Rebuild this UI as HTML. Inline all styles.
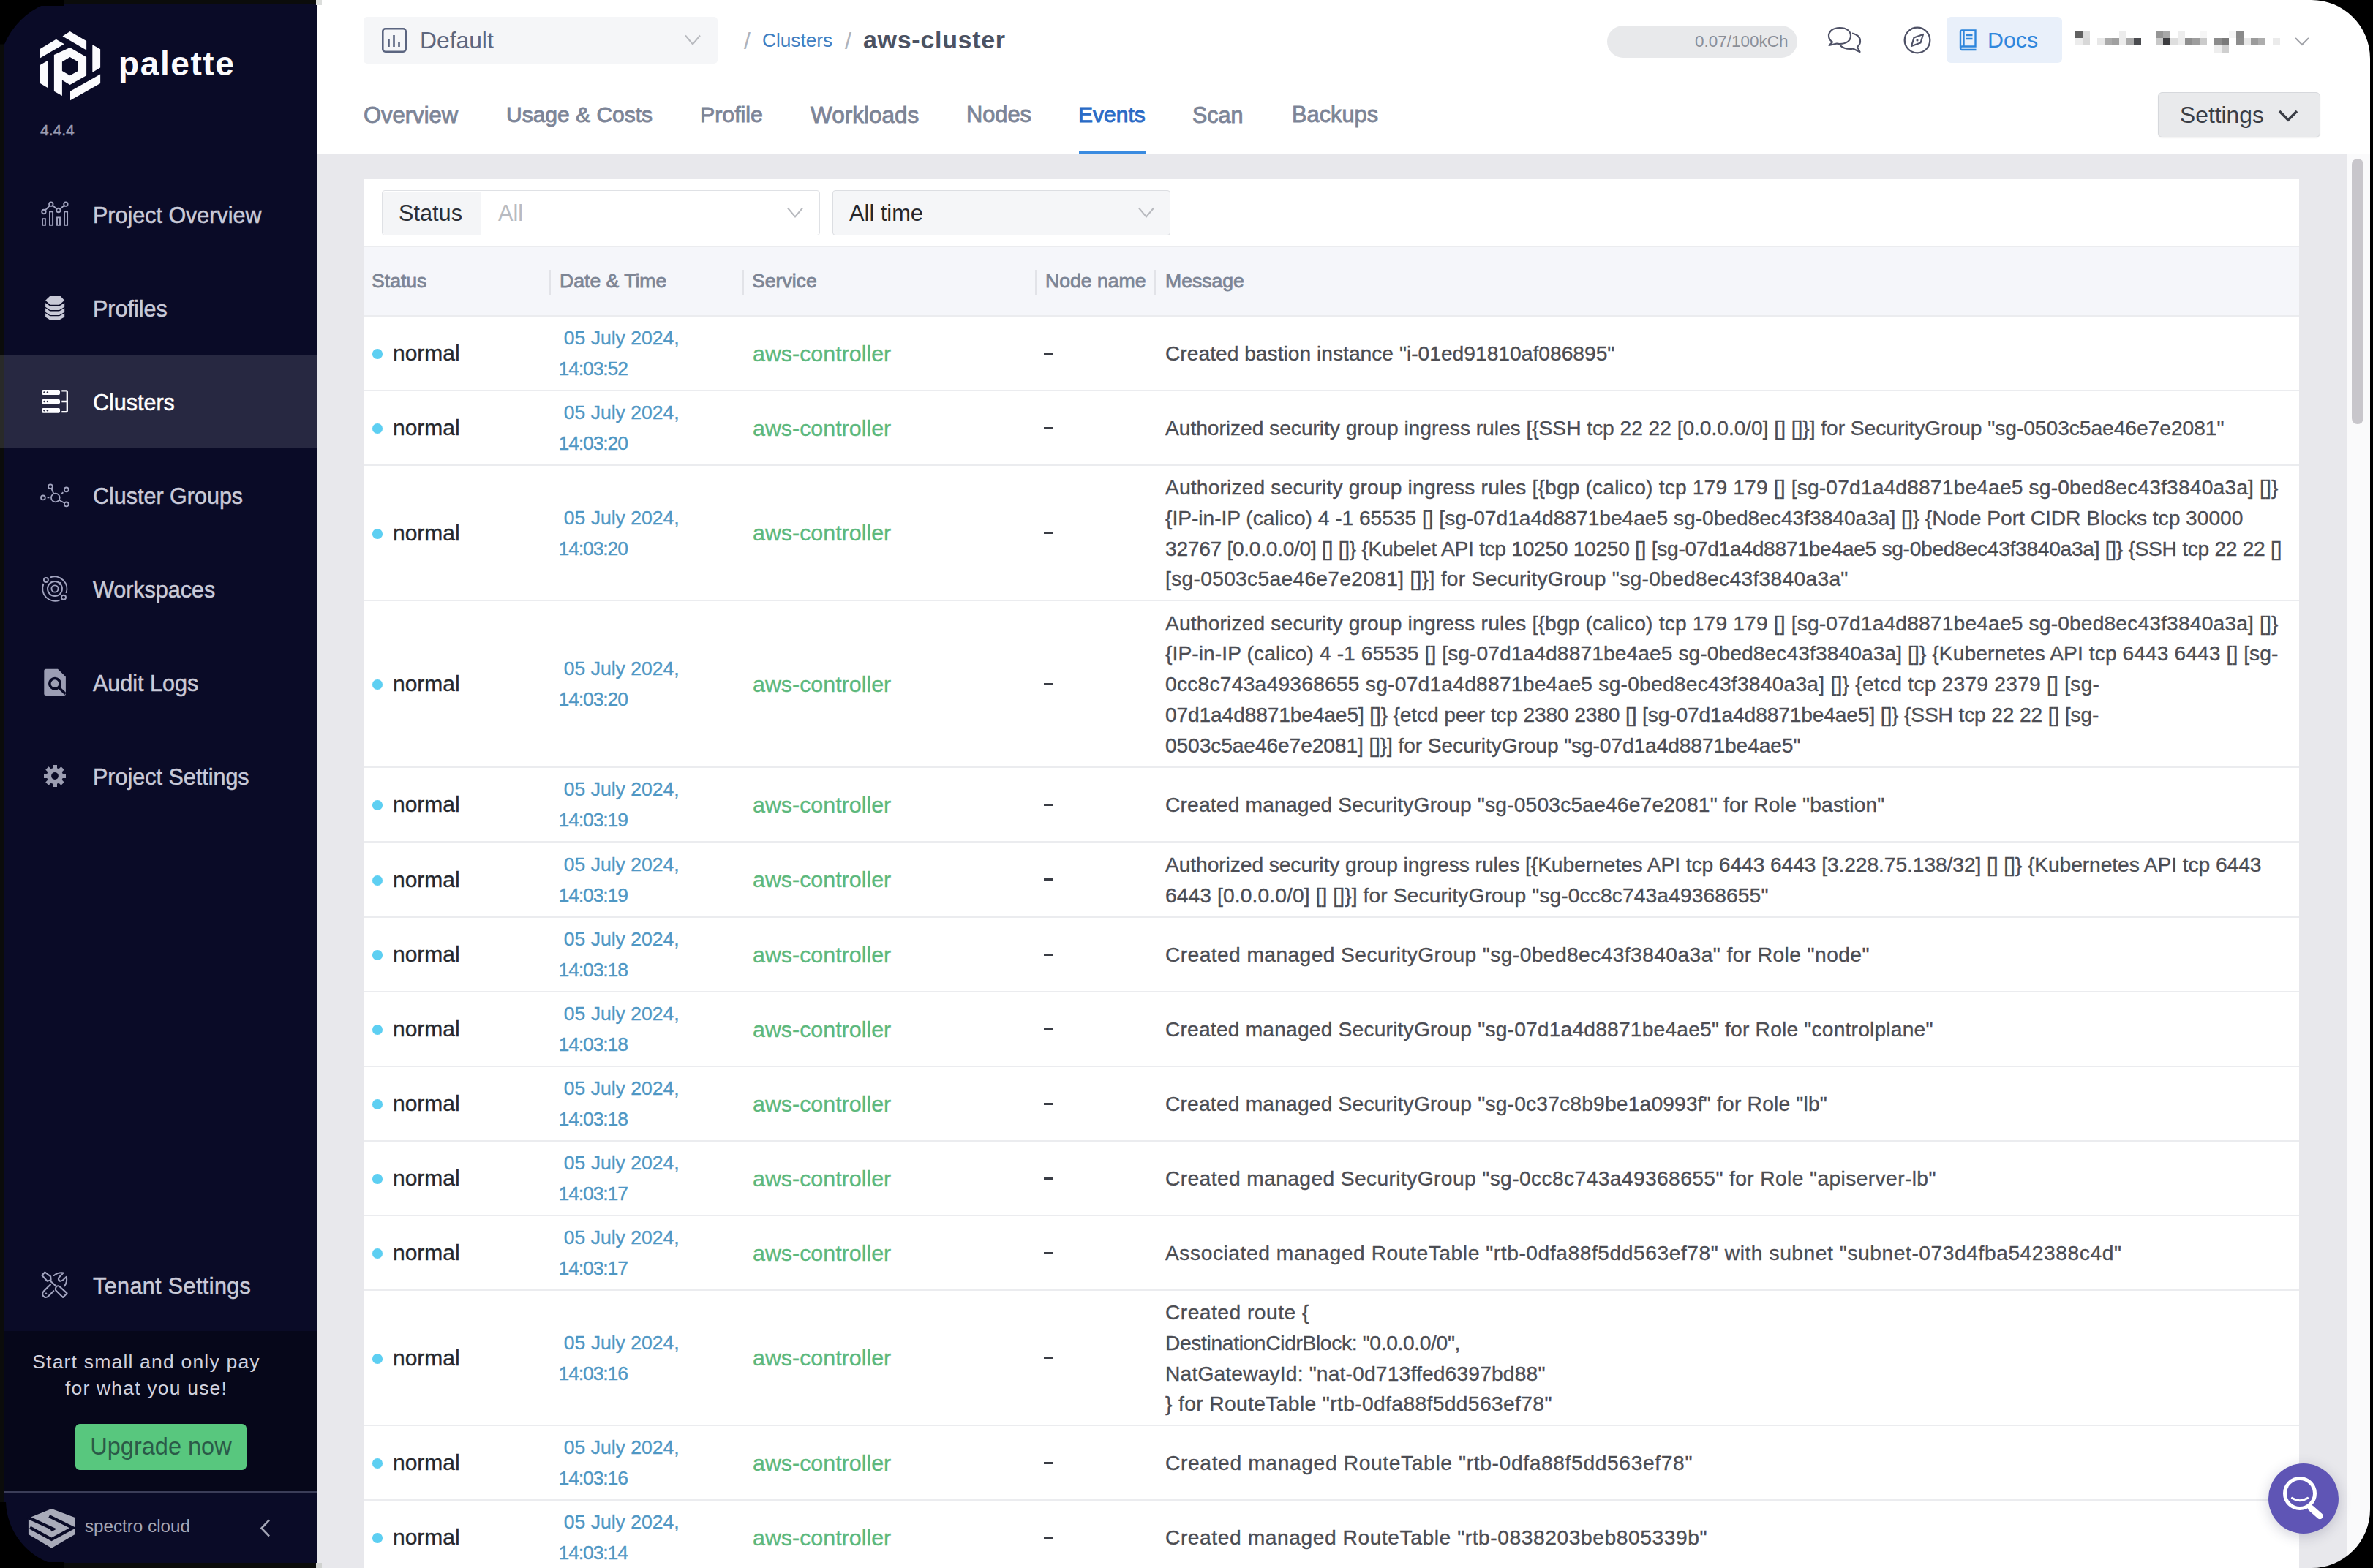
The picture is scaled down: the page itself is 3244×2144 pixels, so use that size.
<!DOCTYPE html>
<html><head><meta charset="utf-8">
<style>
*{box-sizing:border-box;margin:0;padding:0}
html,body{width:3244px;height:2144px;overflow:hidden;background:#fff}
body{position:relative;font-family:"Liberation Sans",sans-serif}
.a{position:absolute}
.t{position:absolute;white-space:pre;line-height:1}
#side{position:absolute;left:0;top:0;width:433px;height:2144px;background:#0a0b27}
.nav{position:absolute;left:6px;width:427px;height:128px}
.nav .lbl{position:absolute;left:121px;top:1px;height:128px;line-height:128px;font-size:30.5px;color:#c9cad8;white-space:pre}
.nav svg{position:absolute}

.row{position:absolute;left:497px;width:2646px;background:#fff}
.row .c{position:absolute;top:0;bottom:0;display:flex;align-items:center;white-space:pre}
.dot{position:absolute;left:12px;top:50%;margin-top:-5.6px;width:13.6px;height:13.6px;border-radius:50%;background:#5dcff2}
.st{left:40px;font-size:30px;color:#27272b}
.dt{top:2px !important;left:266.5px;font-size:26.5px;line-height:41.75px;color:#4f97c4}
.sv{left:532px;font-size:30.4px;color:#5db87c}
.nd{position:absolute;left:930px;width:12px;height:2.6px;background:#3a3d45}
.ms{top:2px !important;left:1096px;font-size:28.2px;line-height:41.75px;color:#4c4d53}
.tm{letter-spacing:-1.1px}
.hd{position:absolute;top:371px;font-size:26.6px;line-height:1;color:#7d8595;white-space:pre}

.tab{-webkit-text-stroke:0.9px currentColor}
.hd{-webkit-text-stroke:0.8px currentColor}
.nav .lbl{-webkit-text-stroke:0.5px currentColor}
.row .c{-webkit-text-stroke:0.35px currentColor}
</style></head>
<body>
<!-- SIDEBAR -->
<div id="side">
  <!-- logo -->
  <svg class="a" style="left:55px;top:43px" width="83" height="95" viewBox="0 0 83 95">
    <g fill="#fbfbfd">
      <polygon points="30.5,6.6 40.6,0 63.1,12.9 63.1,25.6"/>
      <polygon points="0,23.7 21.7,10.8 32.8,17.3 0,36.3"/>
      <polygon points="71.3,18 82.1,24.3 82.1,49.6 71.3,55.9"/>
      <polygon points="0,45.8 10.9,39.5 10.9,77.4 0,71"/>
      <polygon points="41,81.8 82.1,58.4 82.1,71 41,94.2"/>
      <path fill-rule="evenodd" d="M18.9,31.9 L40.6,22.1 L63.1,35 L63.1,60.3 L40.6,73 L29.9,66.6 L29.9,88.1 L18.9,81.8 Z M29.9,41.4 L40.6,35 L51.8,41.4 L51.8,54 L40.6,60.3 L29.9,54 Z"/>
    </g>
  </svg>
  <div class="t" style="left:162px;top:64px;font-size:46px;font-weight:bold;letter-spacing:1.6px;color:#fbfbfd">palette</div>
  <div class="t" style="left:55px;top:167px;font-size:21px;color:#9a9cb2;-webkit-text-stroke:0.5px currentColor">4.4.4</div>

  <!-- nav -->
  <div class="nav" style="top:229px"><div class="lbl">Project Overview</div></div>
  <div class="nav" style="top:357px"><div class="lbl">Profiles</div></div>
  <div class="nav" style="top:485px;background:#272841"><div class="lbl" style="color:#fff">Clusters</div></div>
  <div class="nav" style="top:613px"><div class="lbl">Cluster Groups</div></div>
  <div class="nav" style="top:741px"><div class="lbl">Workspaces</div></div>
  <div class="nav" style="top:869px"><div class="lbl">Audit Logs</div></div>
  <div class="nav" style="top:997px"><div class="lbl">Project Settings</div></div>
  <div class="nav" style="top:1693px"><div class="lbl" style="letter-spacing:0.4px">Tenant Settings</div></div>


  <!-- nav icons -->
  <svg class="a" style="left:0;top:0" width="433" height="2144" viewBox="0 0 433 2144">
    <g fill="none" stroke="#a2a4bf" stroke-width="1.9">
      <path d="M59.9,289.5 L69.8,279.2 L79.9,287.5 L89.9,279.2"/>
      <circle cx="59.9" cy="289.5" r="2.7" fill="#0a0b27"/>
      <circle cx="69.8" cy="279.2" r="2.7" fill="#0a0b27"/>
      <circle cx="79.9" cy="287.5" r="2.7" fill="#0a0b27"/>
      <circle cx="89.9" cy="279.2" r="2.7" fill="#0a0b27"/>
      <rect x="58" y="299.2" width="3.9" height="8.6"/>
      <rect x="68" y="289.4" width="4.1" height="18.4"/>
      <rect x="78" y="297.4" width="4" height="10.4"/>
      <rect x="88" y="289.4" width="4.1" height="18.4"/>
    </g>
    <g fill="#c8c9d7">
      <polygon points="62.1,410.8 68.1,404.9 82.7,404.9 88.2,410.8 81,416.7 68.7,416.7"/>
      <polygon points="62.1,414.3 68.4,418.6 81,418.6 88.2,414.3 88.2,419.8 81,424 68.4,424 62.1,419.8"/>
      <polygon points="62.1,421.3 68.4,425.5 81,425.5 88.2,421.3 88.2,426.8 81,431 68.4,431 62.1,426.8"/>
      <polygon points="62.1,428.2 68.4,432.3 81,432.3 88.2,428.2 88.2,433.5 81,437.4 68.4,437.4 62.1,433.5"/>
    </g>
    <g fill="#fdfdff">
      <rect x="57" y="533" width="25" height="7" rx="2"/>
      <rect x="57" y="546" width="25" height="6.3" rx="2"/>
      <rect x="57" y="558" width="25" height="6.8" rx="2"/>
    </g>
    <g fill="#272841">
      <circle cx="60.5" cy="536.5" r="1.2"/><circle cx="64.9" cy="536.5" r="1.2"/>
      <circle cx="60.5" cy="549" r="1.2"/><circle cx="64.9" cy="549" r="1.2"/>
      <circle cx="60.5" cy="561.3" r="1.2"/><circle cx="64.9" cy="561.3" r="1.2"/>
    </g>
    <path d="M84.3,534.4 H90.6 Q91.8,534.4 91.8,535.6 V562 Q91.8,563.2 90.6,563.2 H84.3 M84.3,549 H91.8" fill="none" stroke="#fdfdff" stroke-width="2.3"/>
    <g fill="none" stroke="#a2a4bf" stroke-width="1.8">
      <circle cx="75.8" cy="680.5" r="5.8"/>
      <circle cx="68.9" cy="665.3" r="2.9"/>
      <circle cx="90.8" cy="669.4" r="2.9"/>
      <circle cx="58.9" cy="680.4" r="2.9"/>
      <circle cx="90.8" cy="689.4" r="2.9"/>
      <path d="M70.6,668.6 L73.4,675.2 M64.6,680.4 H67.4 M84,675.2 L86.4,673.2 M80.7,683.8 L88.2,687.8"/>
    </g>
    <g fill="none" stroke="#a2a4bf" stroke-width="1.9">
      <path d="M68.5,789.5 A17,17 0 0 1 90.5,811 M81.5,820.5 A17,17 0 0 1 59.5,798"/>
      <circle cx="75" cy="805" r="10"/>
      <circle cx="75" cy="805" r="4.6"/>
      <circle cx="62.9" cy="793" r="3"/>
      <circle cx="87" cy="816.8" r="3"/>
    </g>
    <circle cx="81.9" cy="797.8" r="2.1" fill="#a2a4bf"/>
    <path d="M62.8,914.7 H79 L89.9,925.5 V948.5 Q89.9,951 87.4,951 H62.8 Q60.3,951 60.3,948.5 V917.2 Q60.3,914.7 62.8,914.7 Z" fill="#9c9eb4"/>
    <g fill="none" stroke="#0a0b27" stroke-width="3.6">
      <circle cx="75" cy="934.7" r="7.2"/>
      <path d="M80.3,940 L89.5,948.8"/>
    </g>
    
    <g transform="translate(75,1061)" fill="#9c9eb2">
      <circle r="11"/>
      <rect x="-3" y="-15" width="6" height="30"/>
      <rect x="-3" y="-15" width="6" height="30" transform="rotate(45)"/>
      <rect x="-3" y="-15" width="6" height="30" transform="rotate(90)"/>
      <rect x="-3" y="-15" width="6" height="30" transform="rotate(135)"/>
      <circle r="4.9" fill="#0a0b27"/>
    </g>
    <g fill="none" stroke="#a2a4bf" stroke-width="2.1" stroke-linejoin="round" stroke-linecap="round">
      <path d="M57.4,1743.8 L61.4,1739.5 L69.2,1745.3 L69.6,1750.2 L64.6,1751.7 Z"/>
      <path d="M68.5,1751.3 L77,1759"/>
      <path d="M77.3,1758.8 Q79.5,1757.5 81.3,1759 L91.6,1768.4 L86.1,1773.9 L76.4,1764.6 Q74.9,1762.6 77.3,1758.8 Z"/>
      <path d="M68.9,1756.5 L59.5,1765.8 Q56.5,1769.5 59.5,1772.5 Q62.5,1775.5 66,1772.5 L73.3,1765.2"/>
      <path d="M73.8,1744 Q79.5,1739.5 86.4,1740.5 L80.5,1746.8 Q79,1750 81.5,1751.5 Q84,1753 90.6,1745.9 Q92.5,1752.5 88.2,1758.5"/>
    </g>
    <circle cx="63" cy="1768.8" r="1.3" fill="#a2a4bf"/>
    <!-- spectro logo -->
    <polygon fill="#a9abb9" points="38.9,2075.8 70.5,2063.1 102.5,2075.1 102.5,2098 70.5,2116.8 38.9,2098"/>
    <g fill="none" stroke="#0a0b27" stroke-width="4.2" stroke-linejoin="miter">
      <path d="M37.5,2074.5 L72.7,2090.7 L69.5,2092.4"/>
      <path d="M67.2,2073.2 L99.6,2089.2 L70.5,2104.9 L41,2088.6"/>
    </g>
    <path d="M368,2078.5 L357.5,2089.5 L368,2100.5" fill="none" stroke="#a4a6b6" stroke-width="2.6"/>
  </svg>

  <!-- promo -->
  <div class="a" style="left:6px;top:1820px;width:427px;height:219px;background:#06071a"></div>
  <div class="t" style="left:0px;width:400px;top:1849px;font-size:26.5px;letter-spacing:1.2px;color:#d0d1de;text-align:center">Start small and only pay</div>
  <div class="t" style="left:0px;width:400px;top:1885px;font-size:26.5px;letter-spacing:1.2px;color:#d0d1de;text-align:center">for what you use!</div>
  <div class="a" style="left:103px;top:1947px;width:234px;height:63px;background:#58c77e;border-radius:6px"></div>
  <div class="t" style="left:103px;width:234px;top:1962px;font-size:32.5px;color:#2b5a48;text-align:center">Upgrade now</div>
  <div class="a" style="left:6px;top:2039px;width:427px;height:2px;background:#3b3d58"></div>
  <div class="t" style="left:116px;top:2075px;font-size:24.2px;color:#a4a6b6">spectro cloud</div>
</div>

<!-- MAIN -->
<div class="a" style="left:433px;top:0;width:2811px;height:211px;background:#fff"></div>
<div class="a" style="left:434px;top:211px;width:2775px;height:1933px;background:#e8e8ec"></div>
<div class="a" style="left:3209px;top:211px;width:31px;height:1933px;background:#fafafb"></div>
<div class="a" style="left:3215px;top:217px;width:16px;height:363px;background:#c8c6cb;border-radius:8px"></div>

<!-- HEADER -->
<div class="a" style="left:497px;top:23px;width:484px;height:64px;background:#f5f6f8;border-radius:5px"></div>
<svg class="a" style="left:522px;top:38px" width="34" height="34" viewBox="0 0 34 34">
  <rect x="1.3" y="1.3" width="31.4" height="31.4" rx="3.5" fill="none" stroke="#5b6580" stroke-width="2.6"/>
  <path d="M9.5,16 V26 M16.5,10 V26 M23.5,19 V26" stroke="#5b6580" stroke-width="2.6" fill="none"/>
</svg>
<div class="t" style="left:574px;top:40px;font-size:31.8px;color:#5d6780">Default</div>
<svg class="a" style="left:936px;top:47px" width="22" height="16" viewBox="0 0 22 16">
  <path d="M1,1.5 L11,13.5 L21,1.5" fill="none" stroke="#b8babf" stroke-width="2"/>
</svg>
<div class="t" style="left:1017px;top:40px;font-size:32px;color:#aeb2ba">/</div>
<div class="t" style="left:1042px;top:42px;font-size:26.2px;color:#3f7fc2">Clusters</div>
<div class="t" style="left:1155px;top:40px;font-size:32px;color:#aeb2ba">/</div>
<div class="t" style="left:1180px;top:37px;font-size:34px;color:#4b5262;font-weight:bold;letter-spacing:0.7px">aws-cluster</div>

<!-- tabs -->
<div class="t tab" style="left:497px;top:142px;font-size:31px;color:#7d8597">Overview</div>
<div class="t tab" style="left:692px;top:142px;font-size:30px;color:#7d8597">Usage &amp; Costs</div>
<div class="t tab" style="left:957px;top:142px;font-size:30.3px;color:#7d8597">Profile</div>
<div class="t tab" style="left:1108px;top:142px;font-size:31.5px;color:#7d8597">Workloads</div>
<div class="t tab" style="left:1321px;top:142px;font-size:30.8px;color:#7d8597">Nodes</div>
<div class="t tab" style="left:1474px;top:142px;font-size:30px;color:#2a6bc6">Events</div>
<div class="a" style="left:1475px;top:207px;width:92px;height:4px;background:#3a8be0"></div>
<div class="t tab" style="left:1630px;top:142px;font-size:30.5px;color:#7d8597">Scan</div>
<div class="t tab" style="left:1766px;top:142px;font-size:30.8px;color:#7d8597">Backups</div>

<!-- right header -->
<div class="a" style="left:2197px;top:35px;width:260px;height:44px;background:#e8e9eb;border-radius:22px"></div>
<div class="t" style="left:2317px;top:46px;font-size:22.5px;color:#8a8f99">0.07/100kCh</div>
<svg class="a" style="left:2497px;top:35px" width="50" height="40" viewBox="0 0 50 40">
  <path d="M18,3 C8,3 3,8.5 3,14 C3,17.5 5,20.5 8,22.5 L3.5,27 L14,24.5 C15.5,25 16.8,25 18,25 C28,25 33,20 33,14 C33,8 28,3 18,3 Z" fill="none" stroke="#4e5166" stroke-width="2.2" stroke-linejoin="round"/>
  <path d="M35,10.5 C41.5,12 46,16 46,21.5 C46,24.5 44.5,27 42,29 L45.5,36 L36,31.5 C35,31.8 33.8,32 32.5,32 C26.5,32 21.5,30 18.5,27" fill="none" stroke="#4e5166" stroke-width="2.2" stroke-linejoin="round"/>
</svg>
<svg class="a" style="left:2601px;top:35px" width="40" height="40" viewBox="0 0 40 40">
  <circle cx="20" cy="20" r="17.3" fill="none" stroke="#4e5166" stroke-width="2.3"/>
  <path d="M28,12 L24.5,23.5 L12,28 L15.5,16.5 Z" fill="none" stroke="#4e5166" stroke-width="2.2" stroke-linejoin="round"/>
  <circle cx="20" cy="20" r="1.6" fill="#4e5166"/>
</svg>
<div class="a" style="left:2661px;top:23px;width:158px;height:63px;background:#e9f0fa;border-radius:6px"></div>
<svg class="a" style="left:2676px;top:40px" width="28" height="30" viewBox="0 0 28 30">
  <path d="M4,25 V3.5 C4,2.5 4.8,1.5 6,1.5 H24.5 V23.5 H6 C4.8,23.5 4,24.5 4,25.5 C4,27 4.8,28 6,28 H25.5" fill="none" stroke="#2f86dc" stroke-width="2.4"/>
  <path d="M8.5,1.5 V23.5 M12,8 H20.5 M12,13 H20.5" fill="none" stroke="#2f86dc" stroke-width="2.4"/>
</svg>
<div class="t" style="left:2717px;top:40px;font-size:30.3px;color:#2f87dd">Docs</div>
<!-- pixelated user -->
<div class="a" style="left:2837px;top:42px;width:10px;height:10px;background:#616161"></div>
<div class="a" style="left:2847px;top:42px;width:10px;height:10px;background:#dcdcdc"></div>
<div class="a" style="left:2897px;top:42px;width:10px;height:10px;background:#ececec"></div>
<div class="a" style="left:2947px;top:42px;width:10px;height:10px;background:#959595"></div>
<div class="a" style="left:2957px;top:42px;width:10px;height:10px;background:#a8a8a8"></div>
<div class="a" style="left:2977px;top:42px;width:10px;height:10px;background:#ededed"></div>
<div class="a" style="left:3007px;top:42px;width:10px;height:10px;background:#f6f6f6"></div>
<div class="a" style="left:3047px;top:42px;width:10px;height:10px;background:#f5f5f5"></div>
<div class="a" style="left:3057px;top:42px;width:10px;height:10px;background:#8a8a8a"></div>
<div class="a" style="left:2837px;top:52px;width:10px;height:10px;background:#ececec"></div>
<div class="a" style="left:2847px;top:52px;width:10px;height:10px;background:#d8d8d8"></div>
<div class="a" style="left:2867px;top:52px;width:10px;height:10px;background:#e8e8e8"></div>
<div class="a" style="left:2877px;top:52px;width:10px;height:10px;background:#aaaaaa"></div>
<div class="a" style="left:2887px;top:52px;width:10px;height:10px;background:#a0a0a0"></div>
<div class="a" style="left:2897px;top:52px;width:10px;height:10px;background:#ececec"></div>
<div class="a" style="left:2907px;top:52px;width:10px;height:10px;background:#a9a9a9"></div>
<div class="a" style="left:2917px;top:52px;width:10px;height:10px;background:#4a4b4f"></div>
<div class="a" style="left:2947px;top:52px;width:10px;height:10px;background:#c8c8c8"></div>
<div class="a" style="left:2957px;top:52px;width:10px;height:10px;background:#3c3c3f"></div>
<div class="a" style="left:2967px;top:52px;width:10px;height:10px;background:#dedede"></div>
<div class="a" style="left:2977px;top:52px;width:10px;height:10px;background:#ececec"></div>
<div class="a" style="left:2987px;top:52px;width:10px;height:10px;background:#8e8e8e"></div>
<div class="a" style="left:2997px;top:52px;width:10px;height:10px;background:#9d9d9d"></div>
<div class="a" style="left:3007px;top:52px;width:10px;height:10px;background:#cbcbcb"></div>
<div class="a" style="left:3027px;top:52px;width:10px;height:10px;background:#8c8c8c"></div>
<div class="a" style="left:3037px;top:52px;width:10px;height:10px;background:#7a7a7a"></div>
<div class="a" style="left:3057px;top:52px;width:10px;height:10px;background:#8d8d8d"></div>
<div class="a" style="left:3067px;top:52px;width:10px;height:10px;background:#e8e8e8"></div>
<div class="a" style="left:3077px;top:52px;width:10px;height:10px;background:#9b9b9b"></div>
<div class="a" style="left:3087px;top:52px;width:10px;height:10px;background:#adadad"></div>
<div class="a" style="left:3107px;top:52px;width:10px;height:10px;background:#ebebeb"></div>
<div class="a" style="left:3027px;top:62px;width:10px;height:10px;background:#eeeeee"></div>
<div class="a" style="left:3037px;top:62px;width:10px;height:10px;background:#cfcfcf"></div>
<svg class="a" style="left:3137px;top:51px" width="20" height="12" viewBox="0 0 20 12">
  <path d="M1,1 L10,10 L19,1" fill="none" stroke="#a0a2a8" stroke-width="2"/>
</svg>
<!-- settings button -->
<div class="a" style="left:2950px;top:126px;width:222px;height:62px;background:#e9eaec;border:1.5px solid #d6d8dc;border-radius:6px;box-shadow:0 1px 2px rgba(0,0,0,0.06)"></div>
<div class="t" style="left:2980px;top:142px;font-size:31.8px;color:#3a3d45">Settings</div>
<svg class="a" style="left:3114px;top:149px" width="28" height="19" viewBox="0 0 28 19">
  <path d="M2,3 L14,15 L26,3" fill="none" stroke="#3a3d45" stroke-width="3.6"/>
</svg>


<!-- CARD -->
<div class="a" style="left:497px;top:245px;width:2646px;height:1899px;background:#fff"></div>
<div class="a" style="left:522px;top:260px;width:599px;height:62px;border:1.5px solid #dfe1e5;border-radius:4px;background:#fff"></div>
<div class="a" style="left:523.5px;top:261.5px;width:134px;height:59px;background:#f4f5f7;border-right:1.5px solid #dfe1e5;border-radius:3px 0 0 3px"></div>
<div class="t" style="left:545px;top:277px;font-size:30.7px;color:#2c2f36">Status</div>
<div class="t" style="left:681px;top:277px;font-size:30.7px;color:#b8bbc1">All</div>
<svg class="a" style="left:1076px;top:283px" width="22" height="16" viewBox="0 0 22 16"><path d="M1,1.5 L11,13.5 L21,1.5" fill="none" stroke="#b8babf" stroke-width="2"/></svg>
<div class="a" style="left:1138px;top:260px;width:462px;height:62px;border:1.5px solid #dcdee2;border-radius:4px;background:#f5f6f8"></div>
<div class="t" style="left:1161px;top:277px;font-size:30.8px;color:#27272b">All time</div>
<svg class="a" style="left:1556px;top:283px" width="22" height="16" viewBox="0 0 22 16"><path d="M1,1.5 L11,13.5 L21,1.5" fill="none" stroke="#b8babf" stroke-width="2"/></svg>
<div class="a" style="left:497px;top:337px;width:2646px;height:94px;background:#f5f6fa;border-top:1.5px solid #ebecef"></div>
<div class="a" style="left:497px;top:431px;width:2646px;height:2px;background:#ebecef"></div>
<div class="hd" style="left:508px">Status</div>
<div class="hd" style="left:765px">Date &amp; Time</div>
<div class="hd" style="left:1028px">Service</div>
<div class="hd" style="left:1429px">Node name</div>
<div class="hd" style="left:1593px">Message</div>
<div class="a" style="left:751px;top:369px;width:2px;height:35px;background:#e2e3e8"></div>
<div class="a" style="left:1015px;top:369px;width:2px;height:35px;background:#e2e3e8"></div>
<div class="a" style="left:1415px;top:369px;width:2px;height:35px;background:#e2e3e8"></div>
<div class="a" style="left:1578px;top:369px;width:2px;height:35px;background:#e2e3e8"></div>
<!-- TABLE ROWS -->
<div class="row" style="top:433px;height:100px">
 <div class="dot"></div><div class="c st">normal</div>
 <div class="c dt"><div> 05 July 2024,<br><span class="tm">14:03:52</span></div></div>
 <div class="c sv">aws-controller</div>
 <div class="nd" style="top:49px"></div>
 <div class="c ms"><div><span style="letter-spacing:0.009px">Created bastion instance "i-01ed91810af086895"</span></div></div>
</div>
<div class="a" style="left:497px;top:533px;width:2646px;height:2px;background:#ebecef"></div>
<div class="row" style="top:535px;height:100px">
 <div class="dot"></div><div class="c st">normal</div>
 <div class="c dt"><div> 05 July 2024,<br><span class="tm">14:03:20</span></div></div>
 <div class="c sv">aws-controller</div>
 <div class="nd" style="top:49px"></div>
 <div class="c ms"><div><span style="letter-spacing:-0.041px">Authorized security group ingress rules [{SSH tcp 22 22 [0.0.0.0/0] [] []}] for SecurityGroup "sg-0503c5ae46e7e2081"</span></div></div>
</div>
<div class="a" style="left:497px;top:635px;width:2646px;height:2px;background:#ebecef"></div>
<div class="row" style="top:637px;height:183px">
 <div class="dot"></div><div class="c st">normal</div>
 <div class="c dt"><div> 05 July 2024,<br><span class="tm">14:03:20</span></div></div>
 <div class="c sv">aws-controller</div>
 <div class="nd" style="top:90px"></div>
 <div class="c ms"><div><span style="letter-spacing:0.16px">Authorized security group ingress rules [{bgp (calico) tcp 179 179 [] [sg-07d1a4d8871be4ae5 sg-0bed8ec43f3840a3a] []}</span><br><span style="letter-spacing:-0.034px">{IP-in-IP (calico) 4 -1 65535 [] [sg-07d1a4d8871be4ae5 sg-0bed8ec43f3840a3a] []} {Node Port CIDR Blocks tcp 30000</span><br><span style="letter-spacing:-0.299px">32767 [0.0.0.0/0] [] []} {Kubelet API tcp 10250 10250 [] [sg-07d1a4d8871be4ae5 sg-0bed8ec43f3840a3a] []} {SSH tcp 22 22 []</span><br><span style="letter-spacing:0.3px">[sg-0503c5ae46e7e2081] []}] for SecurityGroup "sg-0bed8ec43f3840a3a"</span></div></div>
</div>
<div class="a" style="left:497px;top:820px;width:2646px;height:2px;background:#ebecef"></div>
<div class="row" style="top:822px;height:226px">
 <div class="dot"></div><div class="c st">normal</div>
 <div class="c dt"><div> 05 July 2024,<br><span class="tm">14:03:20</span></div></div>
 <div class="c sv">aws-controller</div>
 <div class="nd" style="top:112px"></div>
 <div class="c ms"><div><span style="letter-spacing:0.16px">Authorized security group ingress rules [{bgp (calico) tcp 179 179 [] [sg-07d1a4d8871be4ae5 sg-0bed8ec43f3840a3a] []}</span><br><span style="letter-spacing:0.083px">{IP-in-IP (calico) 4 -1 65535 [] [sg-07d1a4d8871be4ae5 sg-0bed8ec43f3840a3a] []} {Kubernetes API tcp 6443 6443 [] [sg-</span><br><span style="letter-spacing:0.237px">0cc8c743a49368655 sg-07d1a4d8871be4ae5 sg-0bed8ec43f3840a3a] []} {etcd tcp 2379 2379 [] [sg-</span><br><span style="letter-spacing:-0.152px">07d1a4d8871be4ae5] []} {etcd peer tcp 2380 2380 [] [sg-07d1a4d8871be4ae5] []} {SSH tcp 22 22 [] [sg-</span><br><span style="letter-spacing:-0.116px">0503c5ae46e7e2081] []}] for SecurityGroup "sg-07d1a4d8871be4ae5"</span></div></div>
</div>
<div class="a" style="left:497px;top:1048px;width:2646px;height:2px;background:#ebecef"></div>
<div class="row" style="top:1050px;height:100px">
 <div class="dot"></div><div class="c st">normal</div>
 <div class="c dt"><div> 05 July 2024,<br><span class="tm">14:03:19</span></div></div>
 <div class="c sv">aws-controller</div>
 <div class="nd" style="top:49px"></div>
 <div class="c ms"><div><span style="letter-spacing:0.179px">Created managed SecurityGroup "sg-0503c5ae46e7e2081" for Role "bastion"</span></div></div>
</div>
<div class="a" style="left:497px;top:1150px;width:2646px;height:2px;background:#ebecef"></div>
<div class="row" style="top:1152px;height:101px">
 <div class="dot"></div><div class="c st">normal</div>
 <div class="c dt"><div> 05 July 2024,<br><span class="tm">14:03:19</span></div></div>
 <div class="c sv">aws-controller</div>
 <div class="nd" style="top:49px"></div>
 <div class="c ms"><div><span style="letter-spacing:-0.076px">Authorized security group ingress rules [{Kubernetes API tcp 6443 6443 [3.228.75.138/32] [] []} {Kubernetes API tcp 6443</span><br><span style="letter-spacing:0.106px">6443 [0.0.0.0/0] [] []}] for SecurityGroup "sg-0cc8c743a49368655"</span></div></div>
</div>
<div class="a" style="left:497px;top:1253px;width:2646px;height:2px;background:#ebecef"></div>
<div class="row" style="top:1255px;height:100px">
 <div class="dot"></div><div class="c st">normal</div>
 <div class="c dt"><div> 05 July 2024,<br><span class="tm">14:03:18</span></div></div>
 <div class="c sv">aws-controller</div>
 <div class="nd" style="top:49px"></div>
 <div class="c ms"><div><span style="letter-spacing:0.412px">Created managed SecurityGroup "sg-0bed8ec43f3840a3a" for Role "node"</span></div></div>
</div>
<div class="a" style="left:497px;top:1355px;width:2646px;height:2px;background:#ebecef"></div>
<div class="row" style="top:1357px;height:100px">
 <div class="dot"></div><div class="c st">normal</div>
 <div class="c dt"><div> 05 July 2024,<br><span class="tm">14:03:18</span></div></div>
 <div class="c sv">aws-controller</div>
 <div class="nd" style="top:49px"></div>
 <div class="c ms"><div><span style="letter-spacing:0.191px">Created managed SecurityGroup "sg-07d1a4d8871be4ae5" for Role "controlplane"</span></div></div>
</div>
<div class="a" style="left:497px;top:1457px;width:2646px;height:2px;background:#ebecef"></div>
<div class="row" style="top:1459px;height:100px">
 <div class="dot"></div><div class="c st">normal</div>
 <div class="c dt"><div> 05 July 2024,<br><span class="tm">14:03:18</span></div></div>
 <div class="c sv">aws-controller</div>
 <div class="nd" style="top:49px"></div>
 <div class="c ms"><div><span style="letter-spacing:0.191px">Created managed SecurityGroup "sg-0c37c8b9be1a0993f" for Role "lb"</span></div></div>
</div>
<div class="a" style="left:497px;top:1559px;width:2646px;height:2px;background:#ebecef"></div>
<div class="row" style="top:1561px;height:100px">
 <div class="dot"></div><div class="c st">normal</div>
 <div class="c dt"><div> 05 July 2024,<br><span class="tm">14:03:17</span></div></div>
 <div class="c sv">aws-controller</div>
 <div class="nd" style="top:49px"></div>
 <div class="c ms"><div><span style="letter-spacing:0.392px">Created managed SecurityGroup "sg-0cc8c743a49368655" for Role "apiserver-lb"</span></div></div>
</div>
<div class="a" style="left:497px;top:1661px;width:2646px;height:2px;background:#ebecef"></div>
<div class="row" style="top:1663px;height:100px">
 <div class="dot"></div><div class="c st">normal</div>
 <div class="c dt"><div> 05 July 2024,<br><span class="tm">14:03:17</span></div></div>
 <div class="c sv">aws-controller</div>
 <div class="nd" style="top:49px"></div>
 <div class="c ms"><div><span style="letter-spacing:0.558px">Associated managed RouteTable "rtb-0dfa88f5dd563ef78" with subnet "subnet-073d4fba542388c4d"</span></div></div>
</div>
<div class="a" style="left:497px;top:1763px;width:2646px;height:2px;background:#ebecef"></div>
<div class="row" style="top:1765px;height:183px">
 <div class="dot"></div><div class="c st">normal</div>
 <div class="c dt"><div> 05 July 2024,<br><span class="tm">14:03:16</span></div></div>
 <div class="c sv">aws-controller</div>
 <div class="nd" style="top:90px"></div>
 <div class="c ms"><div><span style="letter-spacing:0.485px">Created route {</span><br><span style="letter-spacing:-0.347px">DestinationCidrBlock: "0.0.0.0/0",</span><br><span style="letter-spacing:0.173px">NatGatewayId: "nat-0d713ffed6397bd88"</span><br><span style="letter-spacing:0.378px">} for RouteTable "rtb-0dfa88f5dd563ef78"</span></div></div>
</div>
<div class="a" style="left:497px;top:1948px;width:2646px;height:2px;background:#ebecef"></div>
<div class="row" style="top:1950px;height:100px">
 <div class="dot"></div><div class="c st">normal</div>
 <div class="c dt"><div> 05 July 2024,<br><span class="tm">14:03:16</span></div></div>
 <div class="c sv">aws-controller</div>
 <div class="nd" style="top:49px"></div>
 <div class="c ms"><div><span style="letter-spacing:0.637px">Created managed RouteTable "rtb-0dfa88f5dd563ef78"</span></div></div>
</div>
<div class="a" style="left:497px;top:2050px;width:2646px;height:2px;background:#ebecef"></div>
<div class="row" style="top:2052px;height:100px">
 <div class="dot"></div><div class="c st">normal</div>
 <div class="c dt"><div> 05 July 2024,<br><span class="tm">14:03:14</span></div></div>
 <div class="c sv">aws-controller</div>
 <div class="nd" style="top:49px"></div>
 <div class="c ms"><div><span style="letter-spacing:0.565px">Created managed RouteTable "rtb-0838203beb805339b"</span></div></div>
</div>
<!-- FAB -->
<div class="a" style="left:3101px;top:2001px;width:96px;height:96px;border-radius:50%;background:#5f55b5;box-shadow:0 4px 18px rgba(40,40,80,0.22)"></div>
<svg class="a" style="left:3101px;top:2001px" width="96" height="96" viewBox="0 0 96 96">
  <circle cx="43" cy="41" r="20.5" fill="none" stroke="#fff" stroke-width="5"/>
  <path d="M58,61 L70.5,72" stroke="#fff" stroke-width="8.5" stroke-linecap="round"/>
  <path d="M32.5,47.5 Q43,54 53.5,47.5" fill="none" stroke="#fff" stroke-width="3.2" stroke-linecap="round"/>
</svg>

<!-- CORNER MASKS -->
<div class="a" style="left:0;top:0;width:432px;height:6px;background:#0b0c0b"></div>
<div class="a" style="left:432px;top:0;width:8px;height:7px;background:#dcdedc"></div>
<div class="a" style="left:0;top:0;width:6px;height:2144px;background:#0b0c0b"></div>
<div class="a" style="left:0;top:485px;width:6px;height:128px;background:#292a29"></div>
<div class="a" style="left:0;top:2137px;width:432px;height:7px;background:#0b0c0b"></div>
<div class="a" style="left:432px;top:2137px;width:8px;height:7px;background:#d0d2d0"></div>
<div class="a" style="left:3240px;top:0;width:4px;height:2144px;background:#000"></div>
<svg class="a" style="left:0;top:0" width="3244" height="2144" viewBox="0 0 3244 2144">
  <path fill="#000" d="M0,0 H88 V6 H60.5 A102,102 0 0 0 6,60.5 H0 Z"/><rect x="56" y="6" width="32" height="2" fill="#000"/>
  <path fill="#000" d="M0,2144 H88 V2136 H65.4 A92,92 0 0 1 8,2054 H0 Z"/>
  <path fill="#000" d="M3244,0 H3160 A80,80 0 0 1 3240,80 H3244 Z"/>
  <path fill="#000" d="M3244,2144 H3160 A80,80 0 0 0 3240,2064 H3244 Z"/>
</svg>
</body></html>
